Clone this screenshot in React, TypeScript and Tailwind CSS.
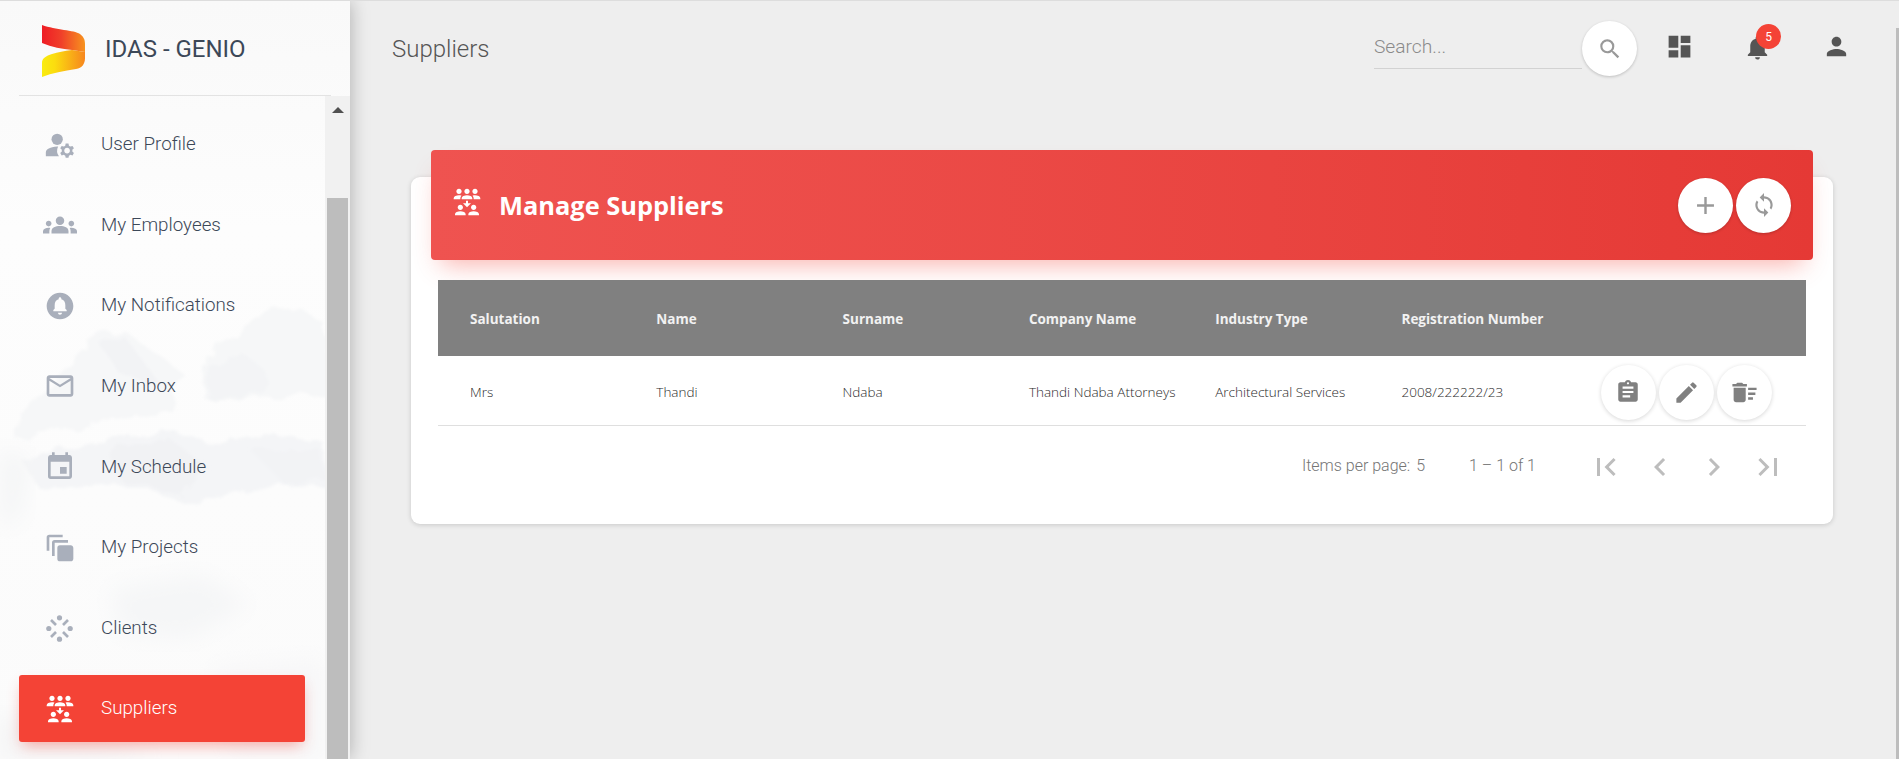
import React from "react";
import {
  MdManageAccounts, MdGroups, MdCircleNotifications, MdMailOutline, MdEvent, MdAutoAwesomeMotion, MdReduceCapacity,
  MdSearch, MdDashboard, MdNotifications, MdPerson, MdAdd, MdLoop, MdAssignment, MdEdit, MdDeleteSweep,
  MdFirstPage, MdChevronLeft, MdChevronRight, MdLastPage,
} from "react-icons/md";

function ClientsIcon({ className }: { className?: string }) {
  return (
    <svg viewBox="0 0 27 27" className={className} fill="currentColor">
      <circle cx="13.5" cy="2.8" r="2.6" />
      <circle cx="13.5" cy="24.2" r="2.6" />
      <circle cx="2.8" cy="13.5" r="2.6" />
      <circle cx="24.2" cy="13.5" r="2.6" />
      <g stroke="currentColor" strokeWidth="2.6" strokeLinecap="butt">
        <line x1="5" y1="5" x2="10" y2="10" />
        <line x1="22" y1="5" x2="17" y2="10" />
        <line x1="5" y1="22" x2="10" y2="17" />
        <line x1="22" y1="22" x2="17" y2="17" />
      </g>
    </svg>
  );
}

function Logo() {
  return (
    <svg viewBox="0 0 44 52" className="w-[44px] h-[52px]">
      <defs>
        <linearGradient id="lg1" x1="0" y1="0" x2="1" y2="0">
          <stop offset="0" stopColor="#ee1c25" />
          <stop offset="0.45" stopColor="#f0402a" />
          <stop offset="1" stopColor="#f7931e" />
        </linearGradient>
        <linearGradient id="lg2" x1="0" y1="0" x2="1" y2="0">
          <stop offset="0" stopColor="#f9ec0f" />
          <stop offset="0.3" stopColor="#fbdc0f" />
          <stop offset="1" stopColor="#f7861e" />
        </linearGradient>
      </defs>
      <path d="M0 0 C14 5 32 5 38 9 C42 12 43 15 43 19 L43 27 L30 25 C20 24 10 22 0 18 Z" fill="url(#lg1)" />
      <path d="M0 52 L0 38 C0 33 4 31 10 29 C16 27 22 26 30 25 L43 27 L43 33 C43 39 40 43 34 44 C22 46 10 48 0 52 Z" fill="url(#lg2)" />
    </svg>
  );
}

const items: { label: string; Icon: React.ComponentType<{ className?: string }>; cls: string; active?: boolean }[] = [
  { label: "User Profile", Icon: MdManageAccounts, cls: "w-[34px] h-[34px]" },
  { label: "My Employees", Icon: MdGroups, cls: "w-[34px] h-[34px]" },
  { label: "My Notifications", Icon: MdCircleNotifications, cls: "w-[32px] h-[32px]" },
  { label: "My Inbox", Icon: MdMailOutline, cls: "w-[32px] h-[32px]" },
  { label: "My Schedule", Icon: MdEvent, cls: "w-[32px] h-[32px]" },
  { label: "My Projects", Icon: MdAutoAwesomeMotion, cls: "w-[32px] h-[32px]" },
  { label: "Clients", Icon: ClientsIcon, cls: "w-[27px] h-[27px]" },
  { label: "Suppliers", Icon: MdReduceCapacity, cls: "w-[32px] h-[32px]", active: true },
];

function NavItem({ label, Icon, cls, active }: (typeof items)[number]) {
  return (
    <div
      className={
        "mx-[19px] w-[286px] h-[67px] mb-[13.64px] shrink-0 rounded-[3px] flex items-center " +
        (active ? "bg-[#f44336] text-white shadow-[0_7px_14px_-4px_rgba(244,67,54,0.45)]" : "text-[#3c4858]")
      }
    >
      <div className={"w-[27px] ml-[27px] mr-[28px] flex justify-center shrink-0 " + (active ? "text-white" : "text-[#a9afbb]")}>
        <Icon className={"shrink-0 " + cls} />
      </div>
      <span className="font-['Roboto',sans-serif] font-light text-[18.8px] leading-none">{label}</span>
    </div>
  );
}

const cols = ["Salutation", "Name", "Surname", "Company Name", "Industry Type", "Registration Number"];
const row = ["Mrs", "Thandi", "Ndaba", "Thandi Ndaba Attorneys", "Architectural Services", "2008/222222/23"];

function RoundBtn({ children, small }: { children: React.ReactNode; small?: boolean }) {
  return (
    <div
      className={
        "w-[55px] h-[55px] rounded-full bg-white flex items-center justify-center shrink-0 " +
        (small ? "shadow-[0_1px_4px_rgba(0,0,0,0.16)]" : "shadow-[0_1px_3px_rgba(0,0,0,0.2)]")
      }
    >
      {children}
    </div>
  );
}

export default function App() {
  return (
    <div className="relative h-[759px] w-[1899px] overflow-hidden flex bg-[#eeeeee] border-t border-[#dddddd] font-['Roboto',sans-serif]">
      {/* Sidebar */}
      <aside className="relative z-10 w-[350px] shrink-0 h-full flex flex-col bg-linear-to-b from-[#f9f9f9] via-[#fdfdfd] via-30% to-[#fbfbfb] shadow-[0_0_18px_rgba(0,0,0,0.28)]">
        <svg viewBox="0 0 325 470" className="absolute left-0 bottom-0 w-[325px] h-[470px] pointer-events-none">
          <defs>
            <filter id="b1" x="-20%" y="-20%" width="140%" height="140%">
              <feTurbulence type="fractalNoise" baseFrequency="0.045" numOctaves="3" seed="4" result="n" />
              <feDisplacementMap in="SourceGraphic" in2="n" scale="16" result="d" />
              <feGaussianBlur in="d" stdDeviation="1.6" />
            </filter>
            <filter id="b2" x="-20%" y="-20%" width="140%" height="140%"><feGaussianBlur stdDeviation="11" /></filter>
          </defs>
          {/* peaks */}
          <path filter="url(#b1)" fill="#f6f7f8" d="M15 139 L33 114 L73 78 L97 44 L127 43 L147 58 L183 84 L170 120 L90 135 L15 150 Z" />
          <path filter="url(#b1)" fill="#f6f7f8" d="M203 78 L233 48 L267 21 L300 19 L325 34 L325 105 L205 112 Z" />
          <path filter="url(#b1)" fill="#f2f3f5" d="M100 55 L125 48 L160 95 L120 85 Z" />
          <path filter="url(#b1)" fill="#f3f4f6" d="M210 80 L240 62 L268 85 L262 105 L208 110 Z" />
          {/* lower ridge */}
          <path filter="url(#b1)" fill="#f4f5f7" d="M20 170 L120 148 L175 142 L215 155 L265 145 L325 155 L325 195 L250 200 L200 215 L120 195 L40 200 Z" />
          <path filter="url(#b1)" fill="#f1f2f4" d="M105 160 L170 150 L210 180 L180 205 L120 190 Z" />
          <path filter="url(#b1)" fill="#f2f3f5" d="M250 160 L320 160 L322 185 L285 195 Z" />
          <path filter="url(#b2)" fill="#f4f5f6" d="M0 160 L30 170 L20 230 L0 240 Z" />
          <path filter="url(#b2)" fill="#f5f6f7" d="M110 300 L200 285 L250 315 L190 350 L120 345 Z" />
          <path filter="url(#b2)" fill="#f4f4f5" d="M0 425 L90 440 L160 470 L0 470 Z" />
          <path filter="url(#b2)" fill="#f7f7f8" d="M210 380 L325 370 L325 470 L230 470 Z" />
        </svg>
        <div className="relative h-[94px] shrink-0 mx-[19px] border-b border-[#e3e3e3] flex items-center box-content">
          <div className="ml-[23px] mr-[19px] mt-[6px] flex items-center"><Logo /></div>
          <span className="mt-[2px] text-[24px] text-[#3c4858] leading-none">IDAS - GENIO</span>
        </div>
        <div className="relative flex-1 min-h-0 flex overflow-hidden">
          <nav className="flex-1 pt-[15px] flex flex-col overflow-hidden">
            {items.map((it) => (
              <NavItem key={it.label} {...it} />
            ))}
          </nav>
          <div className="w-[25px] shrink-0 bg-[#f1f1f1] flex flex-col pl-[2px] pr-[2px]">
            <div className="h-[102px] flex justify-center pt-[11px]">
              <div className="w-0 h-0 border-l-[6px] border-r-[6px] border-b-[6px] border-l-transparent border-r-transparent border-b-[#505050]" />
            </div>
            <div className="flex-1 bg-[#bdbdbd]" />
          </div>
        </div>
      </aside>

      {/* Main */}
      <main className="relative flex-1 min-w-0 h-full flex flex-col">
        <header className="h-[95px] shrink-0 flex items-start">
          <h1 className="ml-[42px] mt-[34px] text-[24px] font-light text-[#555555] leading-[28px]">Suppliers</h1>
          <div className="ml-auto flex items-start">
            <div className="w-[208px] h-[68px] border-b border-[#d2d2d2] pt-[33px] text-[19.2px] font-light text-[#8a8a8a] leading-[26px]">Search...</div>
            <div className="mt-[20px] mr-[28px]">
              <RoundBtn><MdSearch className="w-[26px] h-[26px] text-[#999999]" /></RoundBtn>
            </div>
            <MdDashboard className="mt-[31px] mr-[49px] w-[29px] h-[29px] text-[#555555]" />
            <div className="relative mt-[32px] mr-[50px] w-[29px] h-[29px]">
              <MdNotifications className="w-[29px] h-[29px] text-[#555555]" />
              <span className="absolute left-[13px] top-[-9px] w-[25px] h-[25px] rounded-full bg-[#f44336] text-white text-[12px] flex items-center justify-center leading-none">5</span>
            </div>
            <MdPerson className="mt-[31px] mr-[48px] w-[29px] h-[29px] text-[#555555]" />
          </div>
        </header>

        <section className="relative ml-[61px] mt-[81px] w-[1422px] h-[347px] bg-white rounded-[9px] shadow-[0_1px_5px_rgba(0,0,0,0.16)] flex flex-col">
          <div className="-mt-[27px] mx-[20px] h-[110px] shrink-0 rounded-[4px] bg-linear-to-r from-[#ef5350] to-[#e53935] shadow-[0_14px_24px_-10px_rgba(244,67,54,0.42)] flex items-center pl-[20px] pr-[22px]">
            <MdReduceCapacity className="w-[32px] h-[32px] text-white -mt-[6px]" />
            <span className="ml-[16px] mt-[2px] font-['Open_Sans',sans-serif] font-bold text-[25.4px] leading-none text-white">Manage Suppliers</span>
            <div className="ml-auto flex gap-[3px]">
              <RoundBtn><MdAdd className="w-[29px] h-[29px] text-[#999999]" /></RoundBtn>
              <RoundBtn><MdLoop className="w-[26px] h-[26px] text-[#999999]" /></RoundBtn>
            </div>
          </div>

          <div className="mt-[20px] mx-[27px] font-['Open_Sans',sans-serif]">
            <div className="h-[76px] bg-[#808080] grid grid-cols-[repeat(6,186.3px)_1fr] items-center text-white/90 font-bold text-[13.5px] pl-[32px] pt-[2px]">
              {cols.map((c) => (
                <div key={c}>{c}</div>
              ))}
            </div>
            <div className="h-[70px] border-b border-[#dfdfdf] grid grid-cols-[repeat(6,186.3px)_1fr] items-center text-[#2a2a2a] font-light text-[13.5px] pl-[32px] pt-[3px]">
              {row.map((c) => (
                <div key={c}>{c}</div>
              ))}
              <div className="flex gap-[3px] ml-[13px]">
                <RoundBtn small><MdAssignment className="w-[26px] h-[26px] text-[#808080]" /></RoundBtn>
                <RoundBtn small><MdEdit className="w-[27px] h-[27px] text-[#808080]" /></RoundBtn>
                <RoundBtn small><MdDeleteSweep className="w-[29px] h-[29px] text-[#808080]" /></RoundBtn>
              </div>
            </div>
          </div>

          <div className="flex items-center h-[76px] pt-[4px] mx-[27px] font-light text-[#757575] text-[16px]">
            <span className="ml-auto">Items per page:</span>
            <span className="ml-[6px]">5</span>
            <span className="ml-[44px]">1 – 1 of 1</span>
            <div className="ml-[52px] mr-[20px] mt-[2px] flex gap-[18px] text-[#bdbdbd]">
              <MdFirstPage className="w-[36px] h-[36px]" />
              <MdChevronLeft className="w-[36px] h-[36px]" />
              <MdChevronRight className="w-[36px] h-[36px]" />
              <MdLastPage className="w-[36px] h-[36px]" />
            </div>
          </div>
        </section>

        <div className="absolute right-0 top-[27px] bottom-0 w-[3px] bg-[#bdbdbd]" />
      </main>
    </div>
  );
}
